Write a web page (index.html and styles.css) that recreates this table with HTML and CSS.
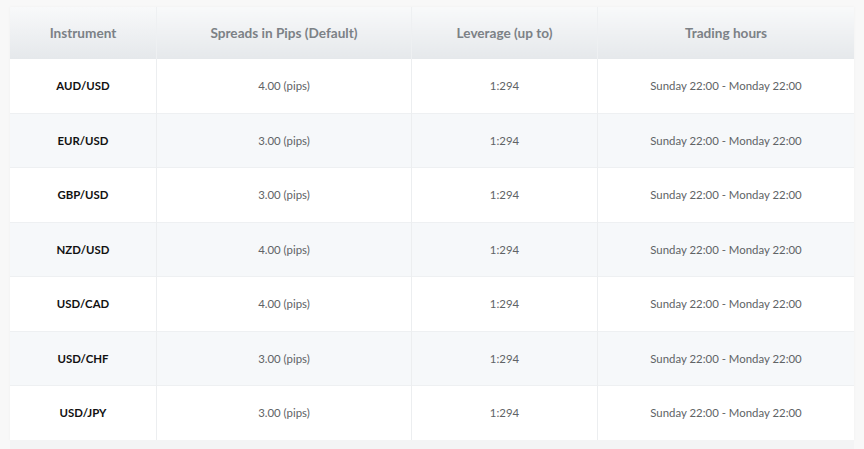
FILE: index.html
```html
<!DOCTYPE html>
<html>
<head>
<meta charset="utf-8">
<link rel="stylesheet" href="styles.css">
</head>
<body>
<div class="wrap">
  <table class="spreads">
    <thead>
      <tr>
        <th class="c1">Instrument</th>
        <th class="c2">Spreads in Pips (Default)</th>
        <th class="c3">Leverage (up to)</th>
        <th class="c4">Trading hours</th>
      </tr>
    </thead>
    <tbody>
      <tr><td class="sym">AUD/USD</td><td>4.00 (pips)</td><td>1:294</td><td>Sunday 22:00 - Monday 22:00</td></tr>
      <tr><td class="sym">EUR/USD</td><td>3.00 (pips)</td><td>1:294</td><td>Sunday 22:00 - Monday 22:00</td></tr>
      <tr><td class="sym">GBP/USD</td><td>3.00 (pips)</td><td>1:294</td><td>Sunday 22:00 - Monday 22:00</td></tr>
      <tr><td class="sym">NZD/USD</td><td>4.00 (pips)</td><td>1:294</td><td>Sunday 22:00 - Monday 22:00</td></tr>
      <tr><td class="sym">USD/CAD</td><td>4.00 (pips)</td><td>1:294</td><td>Sunday 22:00 - Monday 22:00</td></tr>
      <tr><td class="sym">USD/CHF</td><td>3.00 (pips)</td><td>1:294</td><td>Sunday 22:00 - Monday 22:00</td></tr>
      <tr><td class="sym">USD/JPY</td><td>3.00 (pips)</td><td>1:294</td><td>Sunday 22:00 - Monday 22:00</td></tr>
    </tbody>
  </table>
  <div class="tail"></div>
</div>
</body>
</html>
```
FILE: styles.css
```css
html, body {
  margin: 0;
  padding: 0;
  background: #f8f8f8;
}
body {
  font-family: "Source Sans Pro", "Lato", "Liberation Sans", sans-serif;
  color: #666;
}
.wrap {
  padding: 7px 10px 0 10px;
  width: 844px;
}
.spreads {
  width: 844px;
  border-collapse: collapse;
  table-layout: fixed;
  background: #fff;
  box-shadow: 0 0 3px rgba(0,0,0,0.04);
}
.spreads th, .spreads td {
  text-align: center;
  vertical-align: middle;
  padding: 0;
  border-left: 1px solid #eceef0;
}
.spreads th:first-child, .spreads td:first-child {
  border-left: none;
}
.spreads th {
  height: 52px;
  font-size: 13.6px;
  font-weight: 700;
  color: #7c8186;
  background: linear-gradient(#f8f9fa, #e5e8eb);
  border-left-color: #eef0f2;
}
.c1 { width: 146px; }
.c2 { width: 254px; }
.c3 { width: 185px; }
.c4 { width: auto; }
.spreads td {
  height: 53.5px;
  font-size: 11.4px;
  color: #606366;
  border-top: 1px solid #eef0f2;
}
.spreads tbody tr:first-child td {
  border-top: none;
}
.spreads tbody tr:nth-child(even) td {
  background: #f6f8fa;
}
.spreads td.sym {
  font-size: 11.4px;
  font-weight: 700;
  color: #111;
}
.tail {
  height: 20px;
  background: #f3f4f5;
}
```
